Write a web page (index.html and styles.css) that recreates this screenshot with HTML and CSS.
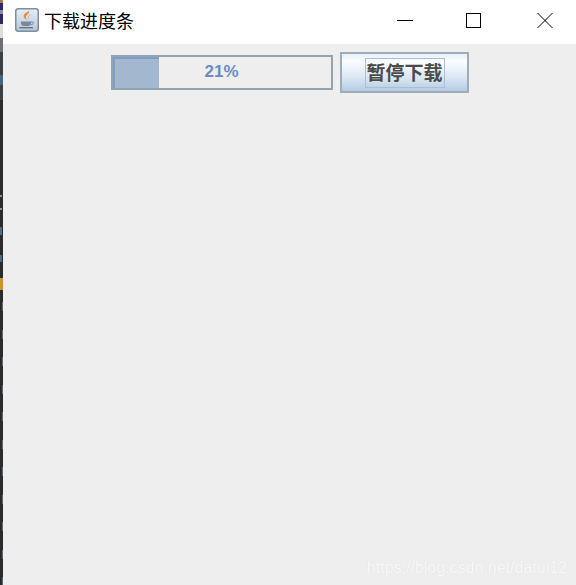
FILE: index.html
```html
<!DOCTYPE html>
<html>
<head>
  <meta charset="UTF-8" />
  <title>下载进度条</title>
  <link rel="stylesheet" href="styles.css">
</head>
<body>
  <div class="desktop-edge">
    <div class="edge-top"></div>
    <span class="edge-mark edge-mark-a"></span>
    <span class="edge-mark edge-mark-b"></span>
    <span class="edge-mark edge-mark-c"></span>
    <span class="edge-mark edge-mark-d"></span>
    <span class="edge-mark edge-mark-e"></span>
    <div class="edge-ticks"></div>
  </div>
  <div class="window">
    <div class="title-bar">
      <svg class="app-icon" viewBox="0 0 24 24" width="24" height="24">
        <defs>
          <linearGradient id="iconBg" x1="0" y1="0" x2="0" y2="1">
            <stop offset="0" stop-color="#e6eef6" />
            <stop offset="1" stop-color="#b4c6d8" />
          </linearGradient>
        </defs>
        <rect x="0.75" y="0.75" width="22.5" height="22.5" rx="2.5" fill="url(#iconBg)" stroke="#7d8e9e" stroke-width="1.5" />
        <path d="M14 2.5c1.5 3-4 4.5-3 7.5.3.8 1 1.8 1 1.8-3-1.2-4.2-3.5-2.5-5.8 1.2-1.5 4-2 4.5-3.500z" fill="#ea8a35" />
        <path d="M16 6.500c-1.800 1.200-3.500 2.300-2.500 5-1.600-2.400.3-4.200 2.500-5z" fill="#e0702a" />
        <path d="M6 13.500h10v1.800c0 1.700-1.200 2.700-2.700 2.700h-4.600c-1.500 0-2.700-1-2.700-2.700z" fill="#7a8898" />
        <path d="M16 14h1.500c1.300 0 1.300 2.500-1.500 2.800" fill="none" stroke="#7a8898" stroke-width="1" />
        <path d="M4.500 19.700h13.500" stroke="#5f7082" stroke-width="1.300" />
      </svg>
      <span class="title-text">下载进度条</span>
      <div class="window-controls">
        <svg viewBox="0 0 16 16" width="16" height="16"><path d="M0 8.500h16" stroke="#000" fill="none" /></svg>
        <svg class="control-max" viewBox="0 0 16 16" width="16" height="16"><rect x="0.500" y="1.500" width="14" height="14" stroke="#000" fill="none" /></svg>
        <svg viewBox="0 0 16 16" width="16" height="16"><path d="M0.500 1l15 15M15.500 1l-15 15" stroke="#000" fill="none" /></svg>
      </div>
    </div>
    <div class="content">
      <div class="download-row">
        <div class="progress">
          <div class="progress-fill" style="width: 21.5%"></div>
          <span class="progress-label">21%</span>
        </div>
        <button class="pause-btn"><span class="pause-btn-text">暂停下载</span></button>
      </div>
      <div class="watermark">https://blog.csdn.net/datui12</div>
    </div>
  </div>
</body>
</html>
```

FILE: styles.css
```css
html, body {
  height: 100%;
}
body {
  margin: 0;
  display: flex;
  background: #eeeeee;
  overflow: hidden;
  font-family: "Noto Sans CJK SC", "Liberation Sans", sans-serif;
}
.desktop-edge {
  width: 3px;
  flex: 0 0 3px;
  background: #2a2b2d;
  display: flex;
  flex-direction: column;
}
.edge-top {
  height: 100px;
  flex: 0 0 100px;
  background: linear-gradient(180deg,
    #a87a50 0 3px,
    #2a2a6a 3px 10px,
    #8d8db0 10px 14px,
    #2a2a6a 14px 24px,
    #dddddd 24px 38px,
    #6a6f78 38px 52px,
    #3c4145 52px 75px,
    #44657f 75px 85px,
    #3c4145 85px 100px);
}
.edge-mark {
  display: block;
  width: 2px;
  height: 2px;
  background: #8b9096;
}
.edge-mark-a {
  margin-top: 95px;
}
.edge-mark-b {
  margin-top: 11px;
}
.edge-mark-c {
  margin-top: 17px;
  height: 8px;
  background: #5c6a76;
}
.edge-mark-d {
  margin-top: 20px;
  height: 7px;
  background: #4f6a80;
}
.edge-mark-e {
  margin-top: 16px;
  height: 12px;
  width: 3px;
  background: #c9952f;
}
.edge-ticks {
  flex: 1;
  width: 1px;
  margin-left: 2px;
  margin-top: 12px;
  background: repeating-linear-gradient(180deg, #62666a 0 9px, transparent 9px 27.500px);
}
.window {
  flex: 1;
  display: flex;
  flex-direction: column;
  min-width: 0;
}
.title-bar {
  height: 44px;
  flex: 0 0 44px;
  background: #ffffff;
  display: flex;
  align-items: center;
  padding-left: 12px;
  padding-right: 23px;
  padding-bottom: 4px;
  box-sizing: border-box;
}
.app-icon {
  flex: 0 0 24px;
}
.title-text {
  margin-left: 5px;
  font-size: 18px;
  color: #000000;
}
.window-controls {
  margin-left: auto;
  display: flex;
  gap: 54px;
}
.control-max {
  margin-left: -1px;
  margin-right: 1px;
}
.content {
  flex: 1;
  position: relative;
  background: #eeeeee;
}
.download-row {
  display: flex;
  justify-content: center;
  align-items: center;
  gap: 7px;
  padding-top: 8px;
}
.progress {
  position: relative;
  width: 222px;
  height: 35px;
  box-sizing: border-box;
  border: 2px solid #93a3b2;
  background: #eeeeee;
  display: flex;
  align-items: center;
  justify-content: center;
  padding-bottom: 2px;
}
.progress-fill {
  position: absolute;
  left: 0;
  top: 0;
  bottom: 0;
  background: #a3b8cf;
  border-left: 2px solid #7f9dc6;
  border-top: 2px solid #7f9dc6;
  box-sizing: border-box;
}
.progress-label {
  position: relative;
  font-family: "Liberation Sans", sans-serif;
  font-size: 17px;
  font-weight: 700;
  color: #6d8ac4;
}
.pause-btn {
  width: 129px;
  height: 41px;
  padding: 0;
  box-sizing: border-box;
  border: 2px solid #9dadbc;
  background: linear-gradient(180deg, #e8eff6 0%, #fbfdff 20%, #d9e6f2 65%, #b4cce0 100%);
  display: flex;
  align-items: center;
  justify-content: center;
}
.pause-btn-text {
  width: 80px;
  height: 30px;
  margin-left: 1px;
  line-height: 25px;
  box-sizing: border-box;
  border: 1px solid #a9bfd2;
  font-family: "Noto Sans CJK SC", sans-serif;
  font-size: 19px;
  font-weight: 700;
  color: #4a4a4a;
  white-space: nowrap;
}
.watermark {
  position: absolute;
  right: 9px;
  bottom: 8px;
  font-family: "Liberation Sans", sans-serif;
  font-size: 16px;
  color: #f8f8f8;
  text-shadow: 0 0 1px #dddddd;
}
```
